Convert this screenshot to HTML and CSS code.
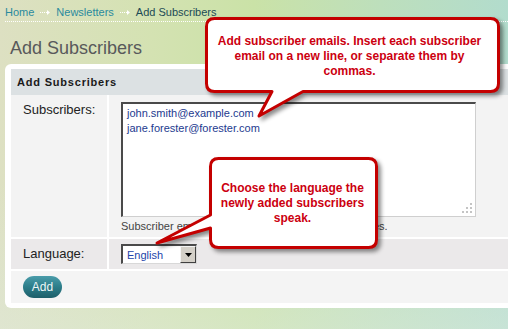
FILE: index.html
```html
<!DOCTYPE html>
<html lang="en">
<head>
<meta charset="utf-8">
<title>Add Subscribers</title>
<link rel="stylesheet" href="styles.css">
</head>
<body>
<nav class="crumbs">
  <a class="crumb-link">Home</a>
  <svg class="crumb-arrow" width="10" height="7" viewBox="0 0 10 7"><rect x="0" y="3" width="1" height="1"/><rect x="2" y="3" width="1" height="1"/><rect x="4" y="3" width="1" height="1"/><rect x="6" y="3" width="2" height="1"/><path d="M7 1 L10 3.5 L7 6 Z"/></svg>
  <a class="crumb-link">Newsletters</a>
  <svg class="crumb-arrow" width="10" height="7" viewBox="0 0 10 7"><rect x="0" y="3" width="1" height="1"/><rect x="2" y="3" width="1" height="1"/><rect x="4" y="3" width="1" height="1"/><rect x="6" y="3" width="2" height="1"/><path d="M7 1 L10 3.5 L7 6 Z"/></svg>
  <span class="crumb-current">Add Subscribers</span>
</nav>
<h1 class="title">Add Subscribers</h1>
<section class="panel">
  <div class="panel-head">Add Subscribers</div>
  <div class="form">
    <div class="label row-a">Subscribers:</div>
    <div class="field row-a">
      <div class="textarea">john.smith@example.com<br>jane.forester@forester.com
        <svg class="grip" width="11" height="11" viewBox="0 0 11 11"><rect x="8" y="0" width="2" height="2"/><rect x="4" y="4" width="2" height="2"/><rect x="8" y="4" width="2" height="2"/><rect x="0" y="8" width="2" height="2"/><rect x="4" y="8" width="2" height="2"/><rect x="8" y="8" width="2" height="2"/></svg>
      </div>
      <div class="hint">Subscriber emails, separated by commas or new lines.</div>
    </div>
    <div class="label row-b">Language:</div>
    <div class="field field-b row-b">
      <div class="select"><span class="select-value">English</span><span class="select-btn"><svg width="7" height="4" viewBox="0 0 7 4"><path d="M0 0 H7 L3.5 4 Z"/></svg></span></div>
    </div>
    <div class="actions"><button class="btn">Add</button></div>
  </div>
</section>
<svg class="callouts" width="508" height="329" viewBox="0 0 508 329">
  <path d="M214.5 18.5 H490.5 Q498.5 18.5 498.5 26.5 V83.5 Q498.5 91.5 490.5 91.5 H303 L259 116 L272 91.5 H214.5 Q206.5 91.5 206.5 83.5 V26.5 Q206.5 18.5 214.5 18.5 Z"/>
  <path d="M218.5 158.5 H368.5 Q376.5 158.5 376.5 166.5 V239.5 Q376.5 247.5 368.5 247.5 H218.5 Q210.5 247.5 210.5 239.5 V228 L157 243 L210.5 215 V166.5 Q210.5 158.5 218.5 158.5 Z"/>
</svg>
<div class="callout-text c1">Add subscriber emails. Insert each subscriber<br>email on a new line, or separate them by<br>commas.</div>
<div class="callout-text c2">Choose the language the<br>newly added subscribers<br>speak.</div>
</body>
</html>
```
FILE: styles.css
```css
html, body { margin: 0; padding: 0; }
body {
  width: 508px;
  height: 329px;
  overflow: hidden;
  position: relative;
  font-family: "Liberation Sans", Arial, sans-serif;
  background:
    linear-gradient(to bottom, rgba(255,255,255,0) 55%, rgba(226,236,226,0.45) 100%),
    linear-gradient(to right, #dde0c2 0%, #d4e2b2 30%, #cae2a7 50%, #bddfbc 75%, #b2dccd 100%);
}
.crumbs {
  display: flex;
  align-items: center;
  gap: 6px;
  margin-left: 5px;
  padding-top: 5px;
  padding-bottom: 2px;
  height: 14px;
  line-height: 14px;
  font-size: 11px;
  border-bottom: 1px dotted #ffffff;
}
.crumb-link { color: #2a8a9e; text-decoration: none; }
.crumb-current { color: #1c4a55; }
.crumb-arrow { fill: #ffffff; display: block; }
.title {
  margin: 16px 0 5px 10px;
  font-size: 18px;
  line-height: 21px;
  font-weight: normal;
  color: #58595b;
}
.panel {
  margin-left: 5px;
  width: 520px;
  background: #ffffff;
  border-radius: 6px;
  padding: 5px 6px;
}
.panel-head {
  height: 26px;
  line-height: 26px;
  background: #dce1e3;
  padding-left: 6px;
  font-weight: bold;
  font-size: 11px;
  letter-spacing: 0.8px;
  color: #1a1a1a;
}
.form {
  display: grid;
  grid-template-columns: 96px 1fr;
  grid-template-rows: 142px 30px 32px;
  gap: 2px;
  background: #ffffff;
}
.row-a { background: #f3f3f3; }
.row-b { background: #ebe9ea; }
.label {
  padding: 7px 0 0 12px;
  font-size: 13px;
  line-height: 15px;
  color: #222222;
}
.field { padding: 7px 0 0 12px; }
.field-b { padding-top: 5px; }
.textarea {
  position: relative;
  box-sizing: border-box;
  width: 355px;
  height: 115px;
  background: #ffffff;
  border-style: solid;
  border-width: 2px 1px 1px 2px;
  border-color: #4a4a4a #cfcfcf #cfcfcf #4a4a4a;
  padding: 2px 4px;
  font-size: 11px;
  line-height: 15px;
  color: #1d3a8f;
}
.grip {
  position: absolute;
  right: 2px;
  bottom: 2px;
  fill: #c4c4c4;
}
.hint {
  margin-top: 3px;
  font-size: 11px;
  line-height: 13px;
  color: #444444;
}
.select {
  box-sizing: border-box;
  width: 76px;
  height: 20px;
  display: flex;
  align-items: center;
  justify-content: space-between;
  background: #ffffff;
  border-style: solid;
  border-width: 2px 1px 1px 2px;
  border-color: #4a4a4a #d8d8d8 #d8d8d8 #4a4a4a;
}
.select-value {
  padding-left: 4px;
  font-size: 11px;
  color: #2244aa;
}
.select-btn {
  box-sizing: border-box;
  width: 16px;
  height: 17px;
  display: flex;
  align-items: center;
  justify-content: center;
  background: #d4d0c8;
  border-style: solid;
  border-width: 1px;
  border-color: #f4f4f4 #404040 #404040 #f4f4f4;
}
.select-btn svg { fill: #000000; display: block; }
.actions {
  grid-column: 1 / -1;
  background: #f4f4f4;
  padding: 5px 0 0 12px;
}
.btn {
  display: block;
  width: 39px;
  height: 22px;
  border: none;
  border-radius: 11px;
  background: linear-gradient(to bottom, #4a9caa 0%, #2c7d89 50%, #1e5f6a 100%);
  color: #eef7f7;
  font-family: "Liberation Sans", Arial, sans-serif;
  font-size: 12px;
  padding: 0;
}
.callouts {
  position: absolute;
  left: 0;
  top: 0;
  fill: #ffffff;
  stroke: #c40000;
  stroke-width: 3;
  stroke-linejoin: round;
  filter: drop-shadow(3px 3px 2px rgba(0,0,0,0.45));
  pointer-events: none;
}
.callout-text {
  position: absolute;
  color: #cc0010;
  font-weight: bold;
  font-size: 12px;
  line-height: 15px;
  text-align: center;
}
.c1 { left: 203px; width: 293px; top: 34px; }
.c2 { left: 210px; width: 165px; top: 181px; }
```
